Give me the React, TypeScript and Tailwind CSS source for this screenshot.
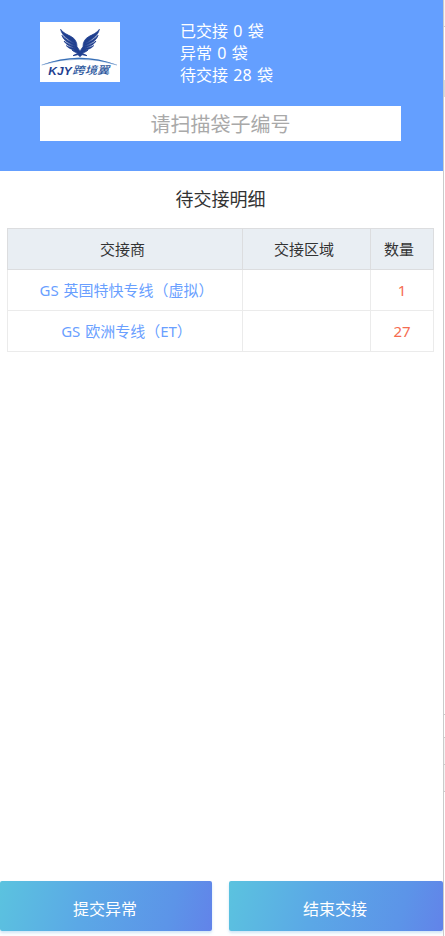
import React from "react";

const rows = [
  { name: "GS 英国特快专线（虚拟）", area: "", count: 1 },
  { name: "GS 欧洲专线（ET）", area: "", count: 27 },
];

const WING =
  "M62 22 C68 32 82 38 94 44 C105 50 111 60 111 74 L119 86 L117 94 C108 92 101 89 96 84 L108 86 C98 82 86 80 79 71 C88 76 98 78 107 79 C94 74 78 69 72 57 C82 66 95 70 106 73 C90 65 71 57 66 40 C76 53 92 60 105 66 C88 54 66 43 62 22Z";

function Logo() {
  return (
    <svg viewBox="0 0 240 180" className="block h-[60px] w-20 bg-white">
      <g fill="#1f3f8f" stroke="#1f3f8f" strokeWidth="2.5">
        <path d={WING} />
        <path d={WING} transform="matrix(-1 0 0 1 240 0)" />
        <path d="M112 83 L120 90 L128 83 L127 94 L141 101 L126 98 L120 104 L114 98 L99 101 L113 94Z" />
      </g>
      <path d="M5 129 Q118 86 231 129 Q118 94 5 129Z" fill="#376eb5" stroke="#376eb5" strokeWidth=".8" />
      <text x="25" y="158" textLength="70" lengthAdjust="spacingAndGlyphs" fill="#1f3f8f" className="font-['Liberation_Sans'] text-[35px] font-bold italic">KJY</text>
      <text x="97" y="157" textLength="111" lengthAdjust="spacingAndGlyphs" fill="#29559c" className="font-['Noto_Sans_CJK_SC'] text-[32px] font-medium italic">跨境翼</text>
    </svg>
  );
}

function ActionButton({ label }: { label: string }) {
  return (
    <button className="h-[50px] rounded-[2px] bg-linear-[105deg,#5bc3df_0%,#5ba8e6_40%,#5c94e8_80%,#6283e9_100%] pr-[2px] pt-[5px] text-base leading-6 text-white shadow-[0_2px_3px_rgba(92,170,230,0.3)]">
      {label}
    </button>
  );
}

export default function App() {
  return (
    <div className="flex h-[936px] w-[445px] overflow-hidden bg-white font-['Noto_Sans','Noto_Sans_CJK_SC',sans-serif] text-[#333]">
      <main className="flex w-[443px] shrink-0 flex-col overflow-hidden">
        <header className="h-[171px] bg-[#649fff] pl-10 pt-[22px]">
          <div className="flex h-[84px] gap-[60px]">
            <Logo />
            <div className="-mt-[2px] text-base leading-[22px] text-white [word-spacing:1.2px]">
              <p>已交接 0 袋</p>
              <p>异常 0 袋</p>
              <p>待交接 28 袋</p>
            </div>
          </div>
          <input
            className="block h-[35px] w-[361px] bg-white pt-px text-center text-xl outline-none placeholder:text-[#a9a9a9]"
            placeholder="请扫描袋子编号"
          />
        </header>
        <h1 className="mt-[14px] h-[43px] pr-[2px] text-center text-lg leading-7">待交接明细</h1>
        <table className="ml-[7px] w-[427px] table-fixed border-collapse text-center text-[15px] leading-5">
          <colgroup>
            <col className="w-[235px]" />
            <col className="w-[128px]" />
            <col className="w-[63px]" />
          </colgroup>
          <thead>
            <tr className="h-[41px] bg-[#e9eef3]">
              <th className="border border-[#dcdddf] pr-[5px] font-normal">交接商</th>
              <th className="border border-[#dcdddf] pr-[5px] font-normal">交接区域</th>
              <th className="border border-[#dcdddf] pr-[6px] font-normal">数量</th>
            </tr>
          </thead>
          <tbody>
            {rows.map((row) => (
              <tr key={row.name} className="h-[41px]">
                <td className="border border-[#ebebeb] pl-[3px] text-[#6a9fff] [word-spacing:1px]">{row.name}</td>
                <td className="border border-[#ebebeb]">{row.area}</td>
                <td className="border border-[#ebebeb] text-[#f56c50]">{row.count}</td>
              </tr>
            ))}
          </tbody>
        </table>
        <footer className="mt-auto grid h-[55px] grid-cols-[212px_214px] gap-[17px]">
          <ActionButton label="提交异常" />
          <ActionButton label="结束交接" />
        </footer>
      </main>
      <div className="w-px shrink-0 bg-[#cbcbcb]" />
      <aside className="flex w-px shrink-0 flex-col">
        <div className="h-[26px] bg-[#f3f3f3]" />
        <div className="h-px bg-[#cbcbcb]" />
        <div className="mt-[53px] h-[17px] bg-[#dadada]" />
        <div className="mt-[617px] h-px bg-[#cbcbcb]" />
        <div className="mt-[22px] h-px bg-[#cbcbcb]" />
        <div className="h-[26px] bg-[#f3f3f3]" />
        <div className="h-px bg-[#cbcbcb]" />
        <div className="h-[26px] bg-[#f3f3f3]" />
        <div className="h-px bg-[#cbcbcb]" />
      </aside>
    </div>
  );
}
